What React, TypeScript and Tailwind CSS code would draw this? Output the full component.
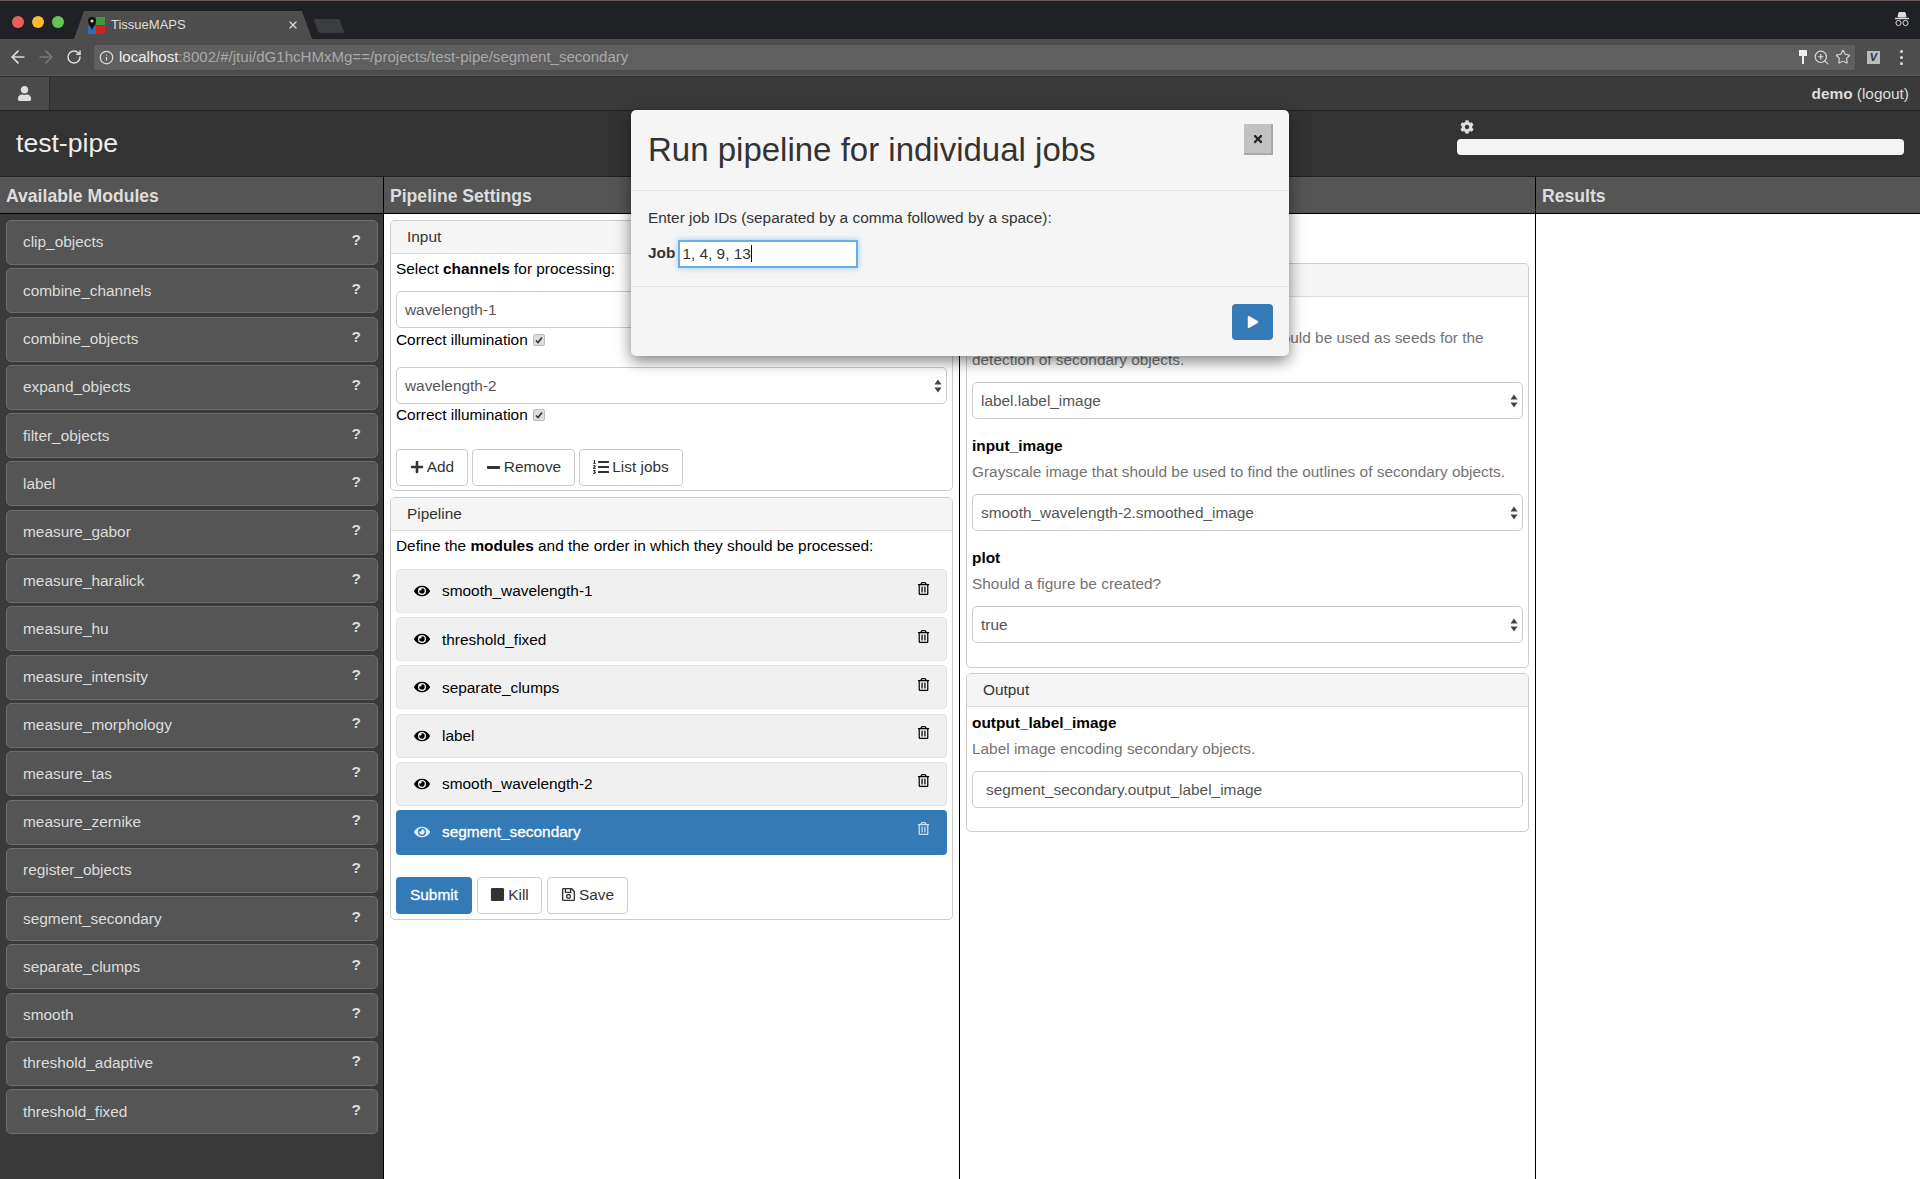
import { FaCog, FaEye, FaListOl, FaMinus, FaPlay, FaPlus, FaRegSave, FaRegTrashAlt, FaStop, FaTimes, FaUser } from "react-icons/fa"
import { ArrowLeft, ArrowRight, Info, RotateCw, Star, X, ZoomIn } from "lucide-react"

const modules = [
  "clip_objects", "combine_channels", "combine_objects", "expand_objects", "filter_objects", "label",
  "measure_gabor", "measure_haralick", "measure_hu", "measure_intensity", "measure_morphology", "measure_tas",
  "measure_zernike", "register_objects", "segment_secondary", "separate_clumps", "smooth", "threshold_adaptive",
  "threshold_fixed",
]

const pipeline = ["smooth_wavelength-1", "threshold_fixed", "separate_clumps", "label", "smooth_wavelength-2"]

const SelectArrows = () => (
  <svg width="8" height="14" viewBox="0 0 8 14" className="fill-[#444] shrink-0">
    <path d="M4 0.5 L7.5 5.5 H0.5 Z M4 13.5 L0.5 8.5 H7.5 Z" />
  </svg>
)

const SelectBox = ({ value, className = "" }: { value: string; className?: string }) => (
  <div className={`h-[37px] rounded-[5px] border border-[#ccc] bg-white flex items-center justify-between pl-[8px] pr-[4px] text-[#555] ${className}`}>
    <span>{value}</span>
    <SelectArrows />
  </div>
)

const Illumination = ({ className = "mt-[3px]" }: { className?: string }) => (
  <div className={`h-[18px] flex items-center text-black ${className}`}>
    Correct illumination
    <span className="ml-[5px] w-[12px] h-[12px] rounded-[2px] bg-[#ddd] border border-[#bbb] flex items-center justify-center">
      <svg width="8" height="8" viewBox="0 0 8 8" fill="none" stroke="#333" strokeWidth="1.6"><path d="M1 4.5 L3 6.5 L7 1.5" /></svg>
    </span>
  </div>
)

const PanelHeader = ({ title }: { title: string }) => (
  <div className="h-[33px] px-[16px] flex items-center bg-[#f5f5f5] border-b border-[#ddd] rounded-t-[4px] text-[#333]">{title}</div>
)

const ColumnHeader = ({ title }: { title?: string }) => (
  <div className="h-[37px] pt-[2px] bg-[#555] border-b border-black px-[6px] flex items-center text-[17.6px] font-bold text-[#ddd]">{title}</div>
)

const Btn = ({ children, width }: { children: React.ReactNode; width: string }) => (
  <div className={`h-[37px] pb-[1px] ${width} rounded-[4px] border border-[#ccc] bg-white flex items-center justify-center gap-[3px] text-[#333]`}>{children}</div>
)

const Field = ({ name, desc, value }: { name: string; desc: string; value: string }) => (
  <div className="mb-[16px]">
    <div className="h-[22px] leading-[22px] font-bold text-black">{name}</div>
    <p className="mt-[4px] leading-[22px] text-[#737373]">{desc}</p>
    <SelectBox value={value} className="mt-[11px]" />
  </div>
)

const BrowserChrome = () => (
  <div className="shrink-0">
    {/* tab strip */}
    <div className="h-[39px] bg-[#202124] border-t border-[#6b5a58] flex items-end relative">
      <div className="absolute left-[12px] top-[15px] flex gap-[8px]">
        <span className="w-[12px] h-[12px] rounded-full bg-[#ec5f57]" />
        <span className="w-[12px] h-[12px] rounded-full bg-[#f5bd2f]" />
        <span className="w-[12px] h-[12px] rounded-full bg-[#62c655]" />
      </div>
      <div className="ml-[74px] w-[238px] h-[28px] bg-[#4e4e4e] [clip-path:polygon(10px_0,228px_0,238px_100%,0_100%)] flex items-center pl-[14px] pr-[13px] text-white text-[13px]">
        <svg width="17" height="17" viewBox="0 0 17 17" className="shrink-0">
          <rect x="8" y="0" width="9" height="8" fill="#3c9a3c" />
          <rect x="8" y="9" width="9" height="8" fill="#d02020" />
          <rect x="0" y="9" width="8" height="8" fill="#2a6fb8" />
          <path d="M4 0 A4 4 0 0 1 8 4 C8 7 5 10 4 13 C3 10 0 7 0 4 A4 4 0 0 1 4 0 Z" fill="#111" />
          <circle cx="4" cy="4" r="1.5" fill="#ddd" />
        </svg>
        <span className="ml-[6px] flex-1 text-[#ddd]">TissueMAPS</span>
        <X size={12} strokeWidth={2.5} className="text-[#ddd]" />
      </div>
      <div className="ml-[4px] mb-[6px] w-[26px] h-[14px] bg-[#3c3d40] rounded-[2px] skew-x-[20deg]" />
      <svg width="18" height="18" viewBox="0 0 18 18" className="absolute right-[9px] top-[10px] fill-none stroke-[#ddd]">
        <path d="M5 6 L6 1.5 H12 L13 6 Z" fill="#ddd" />
        <path d="M2 7.5 H16" strokeWidth="1.4" />
        <circle cx="5.5" cy="12" r="2.6" />
        <circle cx="12.5" cy="12" r="2.6" />
      </svg>
    </div>
    {/* toolbar */}
    <div className="h-[36px] bg-[#4d4d4d] flex items-center pl-[8px] pr-[16px] text-[#ddd]">
      <ArrowLeft size={20} strokeWidth={2} />
      <ArrowRight size={20} strokeWidth={2} className="ml-[8px] text-[#777]" />
      <RotateCw size={16} strokeWidth={2.2} className="ml-[10px]" />
      <div className="ml-[11px] w-[1763px] h-[27px] bg-[#5f5f5f] border border-[#4a4a4a] rounded-[3px] flex items-center pl-[5px] pr-[4px] text-[15.05px]">
        <Info size={15} />
        <span className="ml-[5px] text-[#eee]">localhost</span>
        <span className="text-[#a9a9a9]">:8002/#/jtui/dG1hcHMxMg==/projects/test-pipe/segment_secondary</span>
        <span className="ml-auto flex items-center gap-[5px]">
          <svg width="10" height="16" viewBox="0 0 10 16" fill="#eee"><path d="M1 1 H9 V7 H6 V15 H4 V7 H1 Z" /></svg>
          <ZoomIn size={17} strokeWidth={1.6} />
          <Star size={16} strokeWidth={1.6} />
        </span>
      </div>
      <span className="ml-[11px] w-[13px] h-[13px] bg-[#bbb] text-[#333] text-[11px] italic font-bold flex items-center justify-center">V</span>
      <span className="ml-[20px] flex flex-col gap-[3px]">
        <i className="w-[3px] h-[3px] rounded-full bg-[#ddd]" />
        <i className="w-[3px] h-[3px] rounded-full bg-[#ddd]" />
        <i className="w-[3px] h-[3px] rounded-full bg-[#ddd]" />
      </span>
    </div>
    <div className="h-[2px] bg-[#303030] border-t border-[#5a5a5a]" />
  </div>
)

const RunModal = () => (
  <div className="absolute left-[631px] top-[110px] w-[658px] h-[246px] bg-[#f5f5f5] rounded-[5px] shadow-[0_5px_15px_rgba(0,0,0,0.5)] flex flex-col">
    <div className="h-[81px] px-[17px] border-b border-[#e5e5e5] flex items-center justify-between">
      <h3 className="text-[33px] text-[#333]">Run pipeline for individual jobs</h3>
      <div className="w-[29px] h-[31px] -mt-[21px] mr-[-1px] bg-[#c2c2c2] border-r-2 border-b-2 border-[#a9a9a9] flex items-center justify-center text-[#222]">
        <FaTimes size={12} />
      </div>
    </div>
    <div className="h-[96px] px-[17px] border-b border-[#e5e5e5] text-[#333]">
      <p className="mt-[16px] leading-[22px]">Enter job IDs (separated by a comma followed by a space):</p>
      <div className="mt-[11px] flex items-center">
        <span className="font-bold pb-[2px]">Job</span>
        <div className="ml-[3px] w-[180px] h-[28px] pb-[1px] bg-white border-2 border-[#66afe9] shadow-[0_0_6px_rgba(102,175,233,0.6)] flex items-center pl-[2px]">
          1, 4, 9, 13<span className="w-px h-[17px] bg-black" />
        </div>
      </div>
    </div>
    <div className="flex-1 px-[16px] flex justify-end items-start pt-[17px]">
      <div className="w-[41px] h-[36px] bg-[#337ab7] rounded-[4px] flex items-center justify-center text-white">
        <FaPlay size={12} />
      </div>
    </div>
  </div>
)

export default function App() {
  return (
    <div className="relative w-[1920px] h-[1179px] overflow-hidden flex flex-col bg-white text-[15.4px] font-['Liberation_Sans',Arial,sans-serif]">
      <BrowserChrome />

      {/* app navbar */}
      <div className="h-[33px] shrink-0 bg-[#3a3a3a] flex items-center justify-between pr-[11px] text-[#ddd]">
        <div className="w-[50px] h-full bg-[#4a4a4a] border-r border-[#2c2c2c] flex items-center justify-center">
          <FaUser size={15} className="text-[#ddd]" />
        </div>
        <div><b>demo</b> (logout)</div>
      </div>

      {/* project header */}
      <div className="h-[67px] shrink-0 bg-[#333] border-y border-[#222] flex items-center justify-between pl-[16px] pr-[16px]">
        <h1 className="text-[26.6px] text-[#eee]">test-pipe</h1>
        <div className="w-[447px] -mt-[12px]">
          <FaCog size={14} className="ml-[3px] text-[#ddd]" />
          <div className="mt-[5px] h-[16px] rounded-[4px] bg-[#f5f5f5]" />
        </div>
      </div>

      {/* columns */}
      <div className="flex-1 min-h-0 flex">
        <div className="w-[384px] shrink-0 bg-[#3a3a3a] border-r border-black">
          <ColumnHeader title="Available Modules" />
          <div className="pt-[6px] pl-[6px] pr-[5px] flex flex-col gap-[3.3px]">
            {modules.map((m) => (
              <div key={m} className="h-[45px] pb-[1px] rounded-[5px] bg-[#555] border border-[#6e6e6e] pl-[16px] pr-[16px] flex items-center justify-between text-[#ddd]">
                <span>{m}</span>
                <b className="-mt-[4px]">?</b>
              </div>
            ))}
          </div>
        </div>

        <div className="w-[576px] shrink-0 border-r border-black">
          <ColumnHeader title="Pipeline Settings" />
          <div className="pt-[6px] px-[6px]">
            <div className="h-[271px] rounded-[5px] border border-[#ccc]">
              <PanelHeader title="Input" />
              <div className="px-[5px] text-black">
                <div className="h-[28px] pt-[2px] flex items-center">
                  <span>Select <b>channels</b> for processing:</span>
                </div>
                <SelectBox value="wavelength-1" className="mt-[9px]" />
                <Illumination />
                <SelectBox value="wavelength-2" className="mt-[18px]" />
                <Illumination className="mt-[2px]" />
                <div className="mt-[25px] flex gap-[4px]">
                  <Btn width="w-[72px]"><FaPlus size={14} /> Add</Btn>
                  <Btn width="w-[103px]"><FaMinus size={15} /> Remove</Btn>
                  <Btn width="w-[104px]"><FaListOl size={16} /> List jobs</Btn>
                </div>
              </div>
            </div>
            <div className="mt-[6px] h-[423px] rounded-[5px] border border-[#ccc]">
              <PanelHeader title="Pipeline" />
              <div className="px-[5px] text-black">
                <div className="h-[30px] flex items-center">
                  <span>Define the <b>modules</b> and the order in which they should be processed:</span>
                </div>
                <div className="mt-[8px] flex flex-col gap-[4.2px]">
                  {pipeline.map((p) => (
                    <div key={p} className="h-[44px] rounded-[4px] bg-[#f0f0f0] border border-[#e3e3e3] pl-[17px] pr-[16px] flex items-center">
                      <FaEye size={16} />
                      <span className="ml-[12px] flex-1">{p}</span>
                      <FaRegTrashAlt size={13} className="-mt-[6px]" />
                    </div>
                  ))}
                  <div className="h-[45px] pb-[1px] rounded-[4px] bg-[#337ab7] pl-[18px] pr-[17px] flex items-center text-white">
                    <FaEye size={16} className="text-[#ddeeff]" />
                    <span className="ml-[12px] flex-1 [-webkit-text-stroke:0.3px_white]">segment_secondary</span>
                    <FaRegTrashAlt size={13} className="-mt-[6px] text-[#cfe2f3]" />
                  </div>
                </div>
                <div className="mt-[22px] flex gap-[5px]">
                  <div className="h-[37px] pb-[1px] w-[76px] rounded-[4px] bg-[#337ab7] flex items-center justify-center text-white [-webkit-text-stroke:0.3px_white]">Submit</div>
                  <Btn width="w-[65px]"><FaStop size={15} /> Kill</Btn>
                  <Btn width="w-[81px]"><FaRegSave size={15} /> Save</Btn>
                </div>
              </div>
            </div>
          </div>
        </div>

        <div className="w-[576px] shrink-0 border-r border-black">
          <ColumnHeader />
          <div className="pt-[49px] px-[6px]">
            <div className="h-[405px] rounded-[5px] border border-[#ccc]">
              <PanelHeader title="Input" />
              <div className="px-[5px] pt-[4px]">
                <Field name="input_label_image" desc="Label image encoding primary objects that should be used as seeds for the detection of secondary objects." value="label.label_image" />
                <Field name="input_image" desc="Grayscale image that should be used to find the outlines of secondary objects." value="smooth_wavelength-2.smoothed_image" />
                <Field name="plot" desc="Should a figure be created?" value="true" />
              </div>
            </div>
            <div className="mt-[5px] h-[159px] rounded-[5px] border border-[#ccc]">
              <PanelHeader title="Output" />
              <div className="px-[5px] pt-[5px]">
                <div className="h-[22px] leading-[22px] font-bold text-black">output_label_image</div>
                <p className="mt-[4px] leading-[22px] text-[#737373]">Label image encoding secondary objects.</p>
                <div className="mt-[11px] h-[37px] rounded-[5px] border border-[#ccc] bg-white flex items-center pl-[13px] text-[#555]">segment_secondary.output_label_image</div>
              </div>
            </div>
          </div>
        </div>

        <div className="flex-1 min-w-0">
          <ColumnHeader title="Results" />
        </div>
      </div>

      <RunModal />
    </div>
  )
}
